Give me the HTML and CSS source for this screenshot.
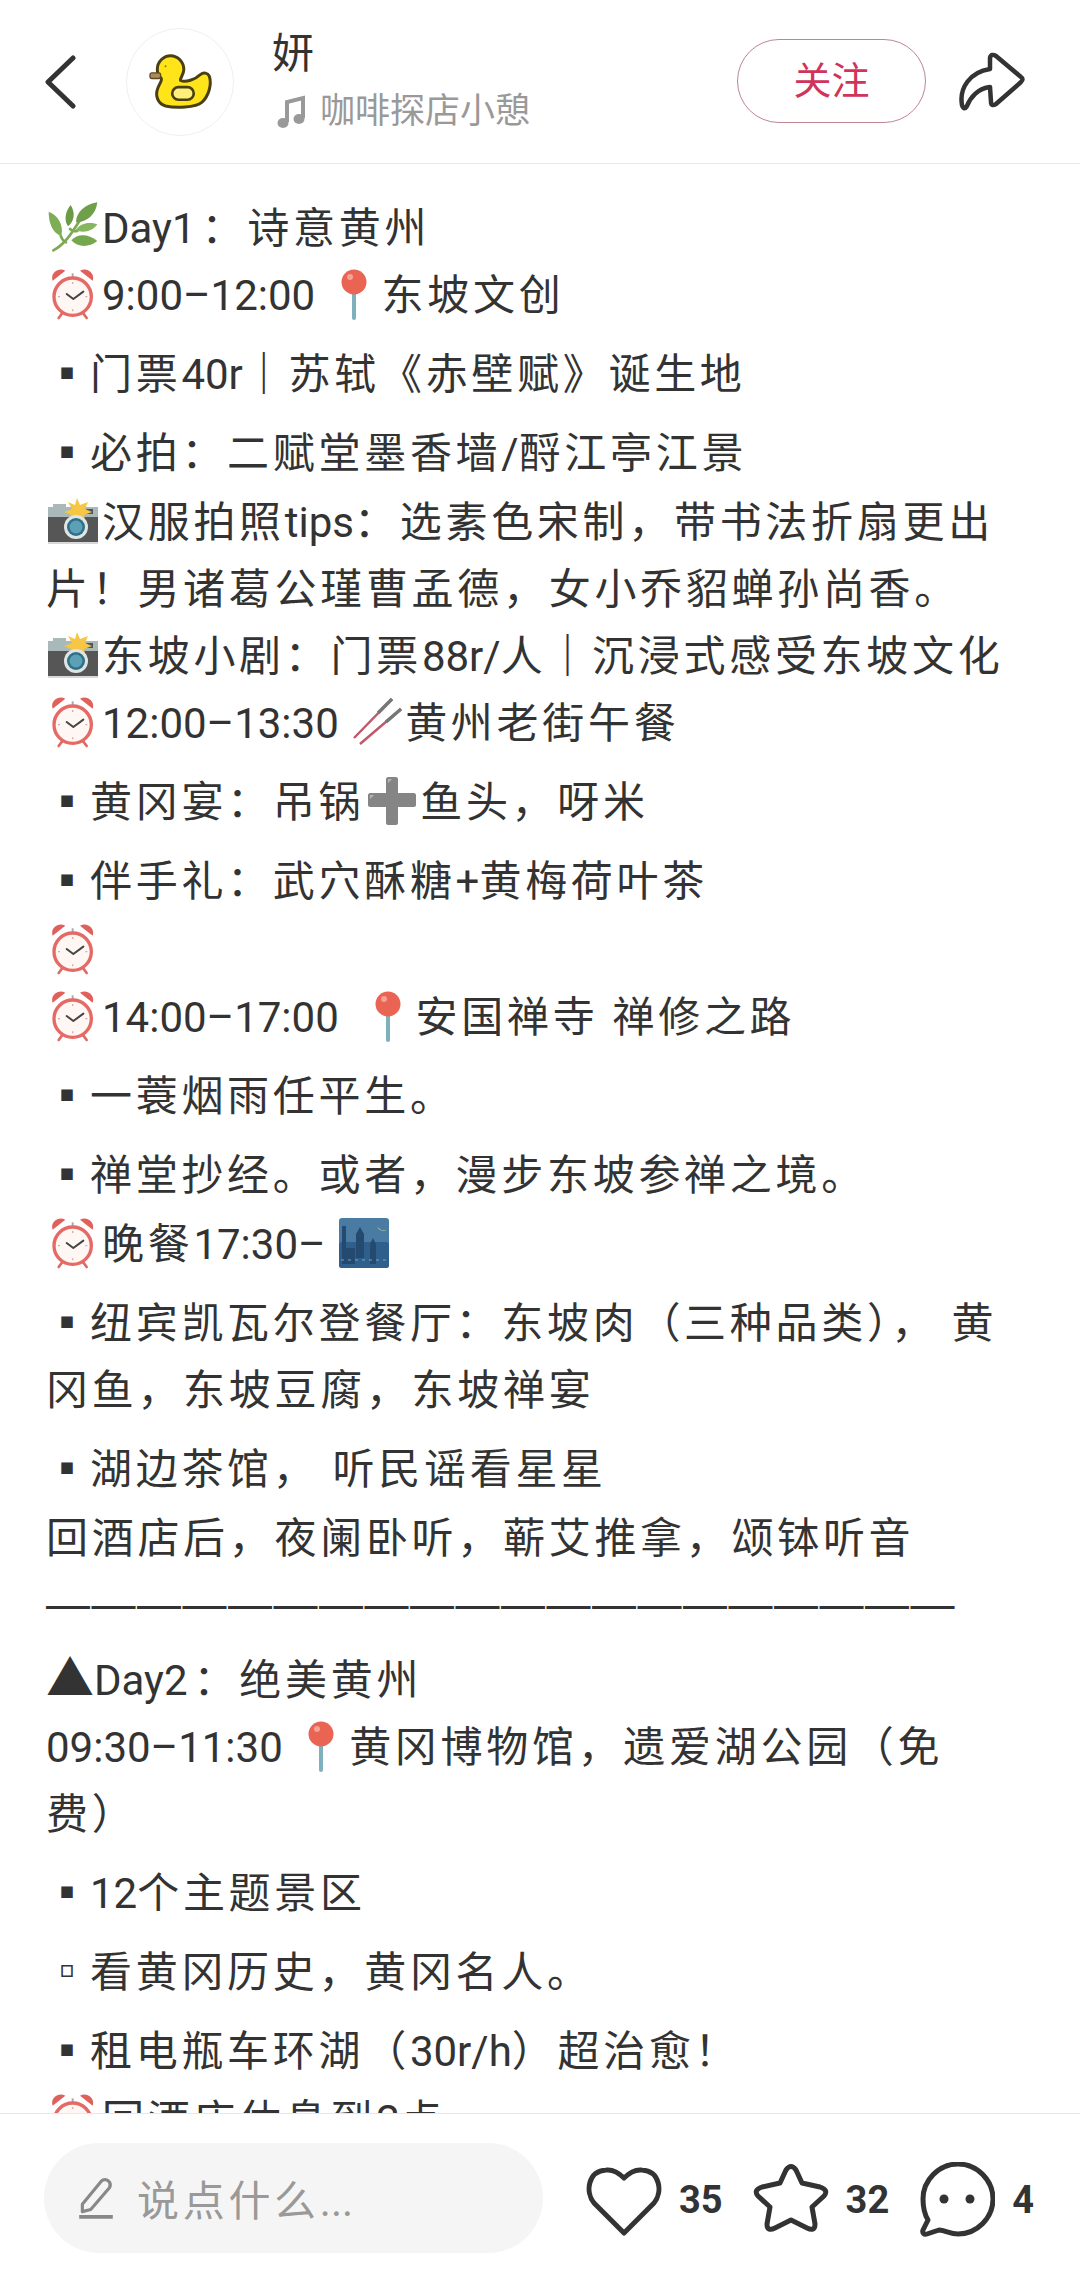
FILE: index.html
```html
<!DOCTYPE html>
<html lang="zh-CN">
<head>
    <meta charset="UTF-8">
    <meta name="viewport" content="width=device-width, initial-scale=1.0">
    <title>妍</title>
    <link rel="stylesheet" href="styles.css">
</head>
<body>

    <!-- emoji drawings, used by the note lines below -->
    <svg class="defs" aria-hidden="true">
        <symbol id="leaf" viewBox="18 28 168 156">
            <path d="M40 176C72 160 92 130 122 82M62 132C66 142 72 150 78 152M90 112C96 118 104 120 112 118" fill="none" stroke="#7da856" stroke-width="8" stroke-linecap="round"/>
            <path d="M108 92C108 62 135 38 172 32C168 68 142 92 108 92Z" fill="#6f9f48"/>
            <path d="M84 104C70 84 78 56 92 40C106 62 104 88 84 104Z" fill="#6a9a44"/>
            <path d="M64 132C36 124 26 92 26 60C52 70 72 98 64 132Z" fill="#7dae55"/>
            <path d="M106 116C122 92 150 90 172 98C158 118 132 126 106 116Z" fill="#86b65e"/>
            <path d="M94 146C112 124 146 126 172 148C146 168 114 168 94 146Z" fill="#74a74e"/>
        </symbol>
        <symbol id="clock" viewBox="18 232 168 156">
            <path d="M68 366L56 382M128 366L140 382" stroke="#dd6b66" stroke-width="8" stroke-linecap="round"/>
            <path d="M98 248V262" stroke="#aaa" stroke-width="6"/>
            <path d="M38 270C30 248 54 228 76 240ZM158 270C166 248 142 228 120 240Z" fill="#e0605c"/>
            <circle cx="98" cy="318" r="56" fill="#fff7f3" stroke="#e56a65" stroke-width="10"/>
            <path d="M80 310L100 325L130 303" fill="none" stroke="#444" stroke-width="6" stroke-linecap="round" stroke-linejoin="round"/>
            <path d="M98 274V280M98 356V362M54 318H60M136 318H142" stroke="#e9a5a0" stroke-width="4"/>
        </symbol>
        <symbol id="pin" viewBox="0 0 56 52">
            <path d="M28 26V50" stroke="#7fb0bd" stroke-width="4" stroke-linecap="round"/>
            <circle cx="28" cy="14" r="12.5" fill="#ea6454"/>
            <circle cx="24" cy="9" r="3" fill="#f6a194"/>
        </symbol>
        <symbol id="camera" viewBox="-2 -3 56 52">
            <path d="M0 9H5V6H18V9H50V20H0Z" fill="#a9b8b8"/>
            <rect x="38" y="11" width="7" height="5" fill="#555"/>
            <rect y="19" width="50" height="25" fill="#565656"/>
            <rect y="44" width="50" height="2" fill="#d8d8d8"/>
            <path d="M29 0L32 7L40 4L37 11L44 14L36 17L37 23L30 20L24 24L23 17L16 14L24 11L20 4L27 7Z" fill="#f6c644"/>
            <circle cx="28" cy="29" r="12" fill="#dfe5e5"/>
            <circle cx="28" cy="29" r="9" fill="#2f6f87"/>
            <circle cx="28" cy="29" r="6.5" fill="#5ba0b5"/>
        </symbol>
        <symbol id="sticks" viewBox="-4 -1 56 52">
            <path d="M1 41L39 2M7 47L48 12" stroke="#c0596a" stroke-width="2.5"/>
            <path d="M25 16L39 2M33 25L48 12" stroke="#777" stroke-width="3.5"/>
        </symbol>
        <symbol id="city" viewBox="-3 -1 56 52">
            <rect width="50" height="50" rx="3" fill="#4a7ca3"/>
            <rect y="24" width="50" height="26" rx="3" fill="#2f5f8c"/>
            <path d="M17 40V16L21 9L25 16V40ZM31 46V26L34 20L37 26V46ZM3 46V8H7V30H16V46Z" fill="#254a70"/>
            <path d="M38 8A7 7 0 0 0 48 12A8 8 0 0 1 38 8Z" fill="#f4ee9c"/>
            <path d="M2 42H48" stroke="#7aa3c2" stroke-width="1" stroke-dasharray="3 4"/>
        </symbol>
        <symbol id="plus" viewBox="0 0 56 52">
            <path d="M22 4C22 3 23 2 24 2H32C33 2 34 3 34 4V18H50C51 18 52 19 52 20V30C52 31 51 32 50 32H34V48C34 49 33 50 32 50H24C23 50 22 49 22 48V32H6C5 32 4 31 4 30V20C4 19 5 18 6 18H22Z" fill="#858585"/>
            <path d="M24 4H28L24 8ZM6 20H10L6 24Z" fill="#b5b5b5"/>
        </symbol>
    </svg>

    <div class="page">
        <!-- top bar -->
        <header class="topbar">
            <svg class="back" viewBox="0 0 32 54"><path d="M29 3L4 27L29 51" fill="none" stroke="#333" stroke-width="5" stroke-linecap="round" stroke-linejoin="round"/></svg>
            <div class="avatar">
                <svg class="duck" viewBox="80 95 200 175">
                    <path d="M110 145C110 120 130 103 150 103C172 103 190 122 190 145C190 160 178 170 180 178C195 185 225 175 240 160C250 152 262 155 267 165C275 190 265 225 245 243C225 260 165 262 135 255C112 248 102 225 112 200C118 185 125 178 122 172C115 165 110 155 110 145Z" fill="#ffe419" stroke="#4a3f12" stroke-width="9" stroke-linejoin="round"/>
                    <rect x="88" y="155" width="32" height="17" rx="6" fill="#b4895a" stroke="#5a4a22" stroke-width="4"/>
                    <circle cx="135" cy="135" r="3" fill="#8a7a20"/>
                    <rect x="155" y="198" width="65" height="38" rx="19" fill="#fff07a" stroke="#4a3f12" stroke-width="8"/>
                </svg>
            </div>
            <div class="author">
                <div class="author-name">妍</div>
                <div class="author-song">
                    <svg class="note" viewBox="0 0 30 34"><path d="M10 27V7L26 3V23" fill="none" stroke="#999" stroke-width="4"/><ellipse cx="6" cy="28" rx="5.5" ry="5" fill="#999"/><ellipse cx="22" cy="24" rx="5.5" ry="5" fill="#999"/></svg>
                    咖啡探店小憩
                </div>
            </div>
            <div class="follow">关注</div>
            <svg class="share" viewBox="0 0 68 60"><path d="M32 6Q33 1 38 4L63 25Q66 27 63 30L38 52Q33 55 33 50L32 35C20 36 12 46 9 54Q6 59 4 53C1 36 12 20 32 17Z" fill="none" stroke="#333" stroke-width="4.5" stroke-linejoin="round"/></svg>
        </header>

        <!-- note text -->
        <main class="note-body">
            <div class="line"><svg class="emoji"><use href="#leaf"/></svg><span class="en day-name">Day1</span>：诗意黄州</div>
            <div class="line"><svg class="emoji"><use href="#clock"/></svg><span class="en">9:00–12:00 </span><svg class="emoji"><use href="#pin"/></svg>东坡文创</div>
            <div class="line item"><span class="mark">▪</span>门票<span class="en">40r</span><span class="bar">｜</span>苏轼《赤壁赋》诞生地</div>
            <div class="line item"><span class="mark">▪</span>必拍：二赋堂墨香墙<span class="en">/</span>酹江亭江景</div>
            <div class="line"><svg class="emoji"><use href="#camera"/></svg>汉服拍照<span class="en">tips</span>：选素色宋制，带书法折扇更出<br>片！男诸葛公瑾曹孟德，女小乔貂蝉孙尚香。</div>
            <div class="line"><svg class="emoji"><use href="#camera"/></svg>东坡小剧：门票<span class="en">88r/</span>人<span class="bar">｜</span>沉浸式感受东坡文化</div>
            <div class="line"><svg class="emoji"><use href="#clock"/></svg><span class="en">12:00–13:30 </span><svg class="emoji"><use href="#sticks"/></svg>黄州老街午餐</div>
            <div class="line item"><span class="mark">▪</span>黄冈宴：吊锅<svg class="emoji"><use href="#plus"/></svg>鱼头，呀米</div>
            <div class="line item"><span class="mark">▪</span>伴手礼：武穴酥糖<span class="en">+</span>黄梅荷叶茶</div>
            <div class="line"><svg class="emoji"><use href="#clock"/></svg></div>
            <div class="line"><svg class="emoji"><use href="#clock"/></svg><span class="en">14:00–17:00 &nbsp;</span><svg class="emoji"><use href="#pin"/></svg>安国禅寺 禅修之路</div>
            <div class="line item"><span class="mark">▪</span>一蓑烟雨任平生。</div>
            <div class="line item"><span class="mark">▪</span>禅堂抄经。或者，漫步东坡参禅之境。</div>
            <div class="line after-gap"><svg class="emoji"><use href="#clock"/></svg>晚餐<span class="en">17:30– </span><svg class="emoji"><use href="#city"/></svg></div>
            <div class="line item"><span class="mark">▪</span>纽宾凯瓦尔登餐厅：东坡肉（三种品类），&nbsp;黄<br>冈鱼，东坡豆腐，东坡禅宴</div>
            <div class="line item"><span class="mark">▪</span>湖边茶馆， 听民谣看星星</div>
            <div class="line">回酒店后，夜阑卧听，蕲艾推拿，颂钵听音</div>
            <div class="line rule">————————————————————</div>
            <div class="line day"><span class="tri">▲</span><span class="en day-name">Day2</span>：绝美黄州</div>
            <div class="line"><span class="en">09:30–11:30 </span><svg class="emoji"><use href="#pin"/></svg>黄冈博物馆，遗爱湖公园（免<br>费）</div>
            <div class="line item"><span class="mark">▪</span><span class="en">12</span>个主题景区</div>
            <div class="line item"><span class="mark">▫</span>看黄冈历史，黄冈名人。</div>
            <div class="line item"><span class="mark">▪</span>租电瓶车环湖（<span class="en">30r/h</span>）超治愈！</div>
            <div class="line"><svg class="emoji"><use href="#clock"/></svg>回酒店休息到<span class="en">2</span>点</div>
        </main>

        <!-- bottom bar -->
        <footer class="bottombar">
            <div class="comment-box">
                <svg class="pen" viewBox="0 0 36 40"><path d="M5 26L23 4C25 2 28 2 30 4C32 6 32 8 31 10L13 31L5 33Z" fill="none" stroke="#888" stroke-width="3" stroke-linejoin="round"/><path d="M2 38H34" stroke="#888" stroke-width="3.5"/></svg>
                <span>说点什么<span class="en">...</span></span>
            </div>
            <div class="stat">
                <svg class="stat-icon" viewBox="0 0 76 76"><path d="M38 71L8 41C-1 30 2 9 20 8C28 7 34 12 38 16C42 12 48 7 56 8C74 9 77 30 68 41Z" fill="none" stroke="#333" stroke-width="5" stroke-linejoin="round"/></svg>
                <span>35</span>
            </div>
            <div class="stat">
                <svg class="stat-icon" viewBox="0 0 76 76"><path d="M33 8Q38 1 43 8L49 21L67 25Q76 28 71 34L59 45L62 62Q62 70 54 66L38 58L22 66Q14 70 14 62L17 45L5 34Q0 28 9 25L27 21Z" fill="none" stroke="#333" stroke-width="5" stroke-linejoin="round"/></svg>
                <span>32</span>
            </div>
            <div class="stat">
                <svg class="stat-icon" viewBox="0 0 76 76"><path d="M39 2C58 2 74 18 74 37C74 56 58 72 39 72C31 72 26 68 20 68L8 72C5 73 3 71 4 68L9 58C6 53 4 45 4 37C4 18 20 2 39 2Z" fill="none" stroke="#333" stroke-width="5" stroke-linejoin="round"/><circle cx="25" cy="37" r="4.5" fill="#333"/><circle cx="51" cy="37" r="4.5" fill="#333"/></svg>
                <span>4</span>
            </div>
        </footer>
    </div>

</body>
</html>
```

FILE: styles.css
```css
body {
    font-family: Roboto, "Noto Sans CJK SC", sans-serif;
    margin: 0;
    padding: 0;
    background-color: white;
    color: #333;
}
.defs {
    display: none;
}
.page {
    display: flex;
    flex-direction: column;
    width: 1080px;
    height: 2288px;
    overflow: hidden;
}

/* top bar */
.topbar {
    display: flex;
    align-items: center;
    height: 163px;
    padding-left: 44px;
    border-bottom: 1px solid #e8e8e8;
    flex-shrink: 0;
}
.back {
    width: 32px;
    height: 54px;
}
.avatar {
    display: flex;
    align-items: center;
    justify-content: center;
    width: 106px;
    height: 106px;
    margin-left: 50px;
    border: 1px solid #efefef;
    border-radius: 50%;
}
.duck {
    width: 67px;
    height: 58px;
}
.author {
    width: 465px;
    margin-left: 38px;
}
.author-name {
    font-size: 42px;
    line-height: 56px;
}
.author-song {
    display: flex;
    align-items: center;
    font-size: 35px;
    line-height: 50px;
    color: #999;
    margin-top: 5px;
}
.note {
    width: 30px;
    height: 34px;
    margin: 0 13px 0 5px;
}
.follow {
    width: 187px;
    height: 82px;
    line-height: 82px;
    margin-bottom: 2px;
    text-align: center;
    font-size: 38px;
    color: #d0345a;
    border: 1px solid #bf8592;
    border-radius: 42px;
}
.share {
    width: 68px;
    height: 60px;
    margin-left: 32px;
}

/* note text */
.note-body {
    flex: 1;
    min-height: 0;
    overflow: hidden;
    padding: 31px 30px 0 46px;
    font-size: 42px;
    letter-spacing: 3.7px;
    white-space: nowrap;
}
.line {
    line-height: 67px;
}
.item {
    margin-top: 12px;
    margin-bottom: 2px;
}
.after-gap {
    margin-top: 1px;
}
.en {
    letter-spacing: 0;
}
.day-name {
    margin-right: 6px;
}
.bar {
    font-weight: 700;
}
.mark {
    display: inline-block;
    width: 44px;
}
.tri {
    display: inline-block;
    width: 48px;
    font-size: 48px;
    letter-spacing: 0;
}
.rule {
    margin-top: -2px;
    font-family: "Liberation Sans", sans-serif;
    font-size: 44px;
    letter-spacing: 1.5px;
}
.day {
    margin-top: 8px;
}
.emoji {
    width: 56px;
    height: 52px;
    vertical-align: -10px;
}

/* bottom bar */
.bottombar {
    display: flex;
    align-items: center;
    height: 175px;
    padding: 0 0 7px 44px;
    box-sizing: border-box;
    border-top: 1px solid #e8e8e8;
    background-color: white;
    flex-shrink: 0;
}
.comment-box {
    display: flex;
    align-items: center;
    width: 499px;
    height: 110px;
    margin-right: 43px;
    background-color: #f5f5f5;
    border-radius: 55px;
    font-size: 42px;
    letter-spacing: 3.7px;
    color: #999;
}
.pen {
    width: 38px;
    height: 42px;
    margin: 0 22px 0 33px;
}
.stat {
    display: flex;
    align-items: center;
    margin-top: 4px;
    margin-right: 30px;
    font-size: 38px;
    font-weight: 700;
}
.stat-icon {
    width: 76px;
    height: 76px;
    margin-right: 17px;
}
```
